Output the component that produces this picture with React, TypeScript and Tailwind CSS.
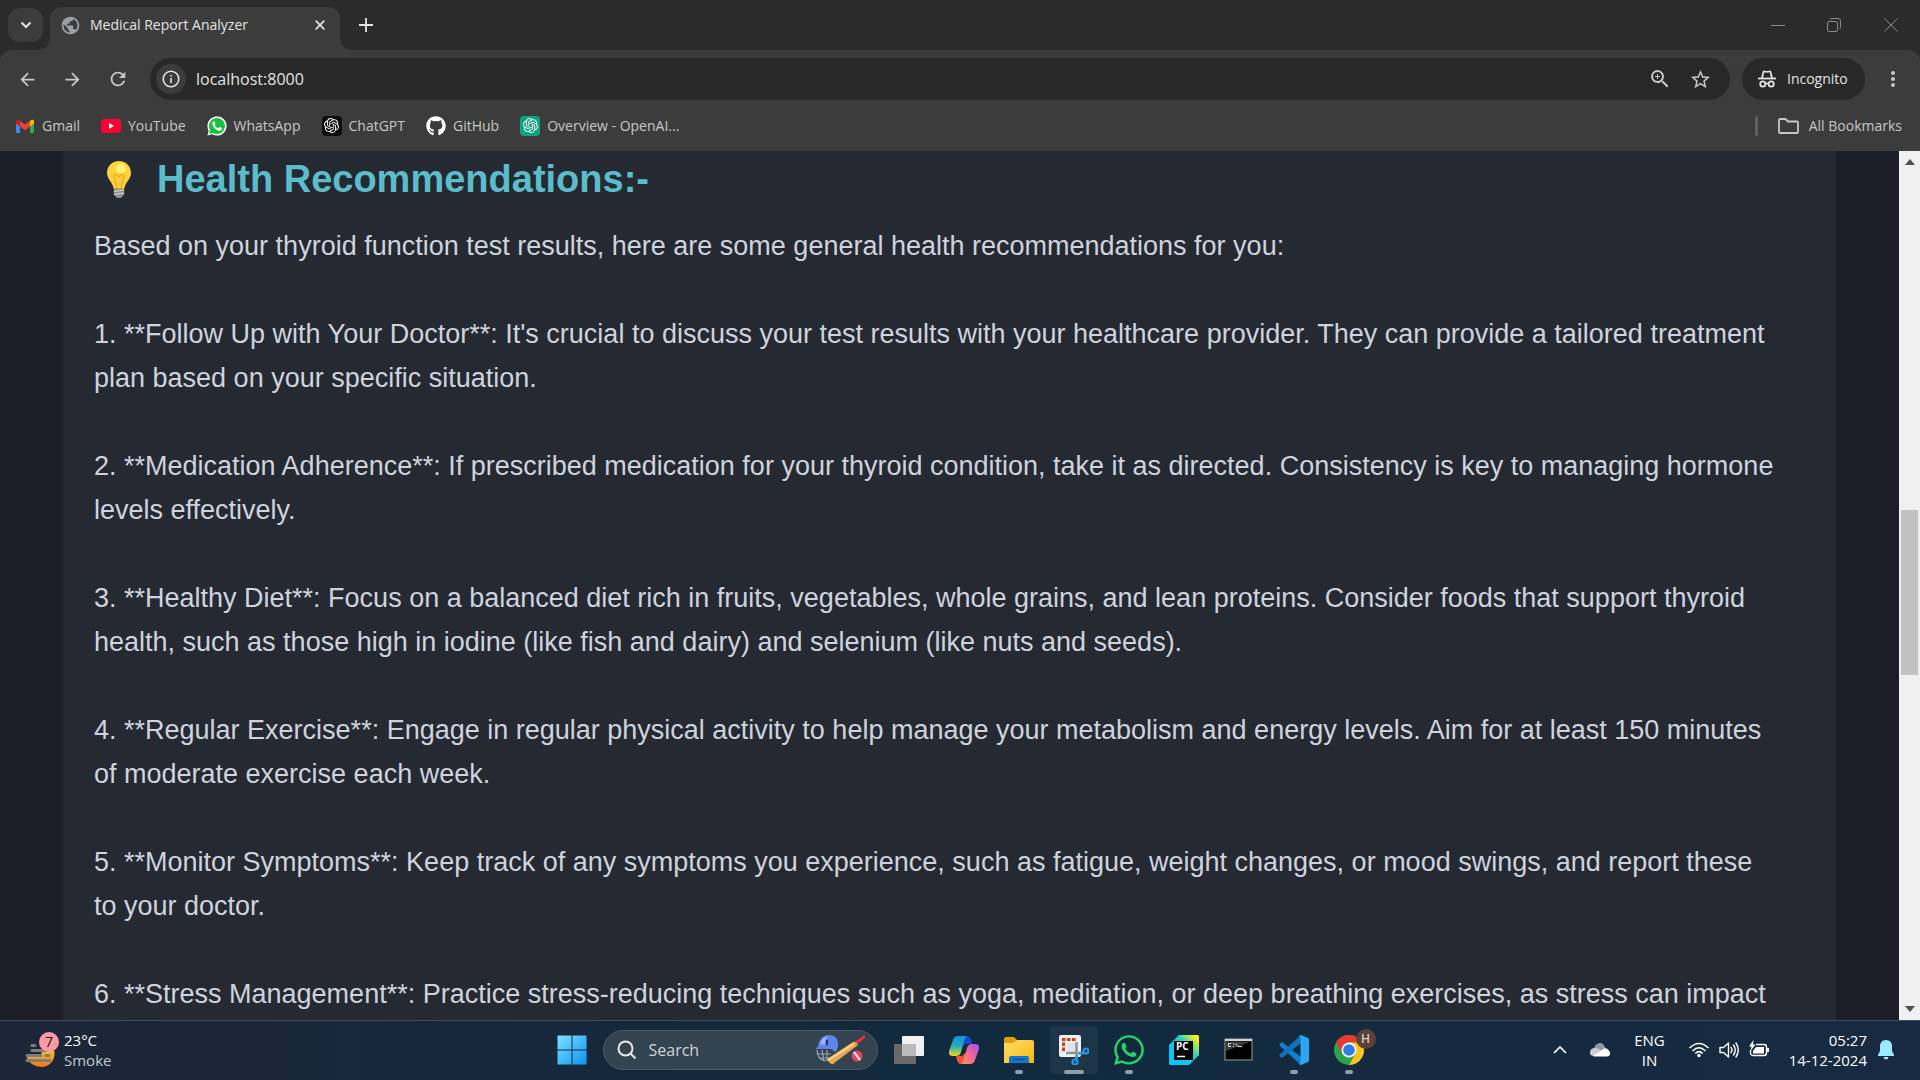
import React from "react";
import { FaGithub, FaWhatsapp } from "react-icons/fa";
import { SiOpenai } from "react-icons/si";
import { MdZoomIn, MdStarOutline, MdArrowBack, MdArrowForward, MdRefresh, MdPublic, MdMoreVert } from "react-icons/md";

function GmailIcon() {
  return (
    <svg viewBox="0 0 20 20" className="size-5" aria-hidden="true">
      <path d="M1 5v11q0 1 1 1h3V8z" fill="#4285f4" />
      <path d="M19 5v11q0 1-1 1h-3V8z" fill="#34a853" />
      <path d="M15 5.200C17 3 19 3.500 19 5.700V7.500l-4 3z" fill="#fbbc04" />
      <path d="M1 5.700C1 3.500 3 3 5 4.800V10.500L1 7.500z" fill="#c5221f" />
      <path d="M5 4.800 10 8.600 15 4.800V10.500L10 14.200 5 10.500z" fill="#ea4335" />
    </svg>
  );
}

function YouTubeIcon() {
  return (
    <svg viewBox="0 0 20 20" className="size-5" aria-hidden="true">
      <rect y="3" width="20" height="14" rx="3.500" fill="#ff0033" />
      <path d="M8 7v6l5-3z" fill="#fff" />
    </svg>
  );
}

function WhatsAppIcon() {
  return (
    <svg viewBox="0 0 24 24" className="size-5" aria-hidden="true">
      <path d="M.5 23.500 2 17.600A11.500 11.500 0 1 1 6.400 22z" fill="#fff" />
      <path d="m2.600 21.500 1.200-4.300A9.600 9.600 0 1 1 7 20.300z" fill="#15c13f" />
      <path d="M8.400 6.300c-.7 0-2 1-2 2.800 0 3.400 4.700 8.600 8.500 8.600 2 0 3-1.400 3-2.700 0-.5-2.700-2-3-1.800-.5.200-1 1.600-1.400 1.500-1.800-.5-3.900-2.600-4.300-4 0-.4.900-.9.900-1.500 0-.4-.9-2.900-1.700-2.900z" fill="#fff" />
    </svg>
  );
}

function IncognitoIcon() {
  return (
    <svg viewBox="0 0 20 20" className="size-5" fill="none" stroke="#e3e3e3" strokeWidth="1.800" aria-hidden="true">
      <path d="M5 9 6.500 3Q7 2 8 2.500 10 3.300 12 2.500 13 2 13.500 3L15 9" />
      <path d="M1 9.500h18" />
      <circle cx="5.800" cy="15" r="2.600" />
      <circle cx="14.200" cy="15" r="2.600" />
      <path d="M8.500 14.500h3" />
    </svg>
  );
}

function BulbIcon() {
  return (
    <svg viewBox="0 0 24 37" className="h-[37px] w-6" aria-hidden="true">
      <path d="M12 0C5 0 0 5.200 0 11.800c0 6.500 5.800 9.400 6.700 16h10.600c.9-6.600 6.700-9.500 6.700-16C24 5.200 19 0 12 0z" fill="#fdd23c" />
      <path d="M10 28 7 14.500q2-3 3.500 0 1.500 2 3 0 1.500-3 3.500 0L14 28" fill="none" stroke="#fba51c" strokeWidth="1.300" />
      <circle cx="14" cy="7.500" r="5" fill="#fff176" />
      <path d="M6.800 28h10.400v5.500L14 37h-4l-3.200-3.500z" fill="#8f8f93" />
      <path d="m7 30.500 10-1.500M7 33.500 17 32" stroke="#dcdcde" strokeWidth="1.200" />
    </svg>
  );
}

function WeatherIcon() {
  return (
    <svg viewBox="0 0 36 38" className="h-[38px] w-9" aria-hidden="true">
      <defs>
        <linearGradient id="sun" x2="0" y2="1">
          <stop stopColor="#f9bd2d" />
          <stop offset="1" stopColor="#f5731b" />
        </linearGradient>
      </defs>
      <path d="M3 24h13q0-4 4-4h9.500q.500 8-3.500 12-4.500 4-9 4Q6 35 2 28z" fill="url(#sun)" />
      <g stroke="#7b7d80" strokeWidth="3" strokeLinecap="round">
        <path d="M7 14.500h3M7 19.500h14M2 24.500h14M21 24.500h3M2 29.500h23" />
      </g>
      <circle cx="24" cy="11" r="10" fill="#ff99a4" />
      <text x="24" y="16" textAnchor="middle" fontSize="14" fontFamily="Open Sans, sans-serif" fill="#111">7</text>
    </svg>
  );
}

function StartIcon() {
  return (
    <svg viewBox="0 0 30 30" className="size-[30px]" aria-hidden="true">
      <defs>
        <linearGradient id="win" x2="1" y2="1">
          <stop stopColor="#7fe0ff" />
          <stop offset="1" stopColor="#0a93f5" />
        </linearGradient>
      </defs>
      <path d="M1 .5h13.500V14.500H.5V1zM15.500.5H29l.5.500v13.500h-14zM.5 15.500h14v14H1L.5 29zM15.500 15.500h14V29l-.5.500H15.500z" fill="url(#win)" />
    </svg>
  );
}

function CricketIcon() {
  return (
    <svg viewBox="0 0 50 30" className="h-[30px] w-[50px]" aria-hidden="true">
      <g fill="none" stroke="#9aa7b5" strokeWidth="1.200">
        <path d="M2 15q0 9 8 11l7-2M3 19h13M5 23h11M7 15l2 11M12 15v11" />
      </g>
      <path d="M3 12C4 3 9 0 14 0c6 0 10 4 9 12l-2 5-5-3H1q-1-1 2-2z" fill="#5d84ea" />
      <path d="M5 9Q7 2 13 1q-4 4-3 9z" fill="#9bb6ff" />
      <path d="M12 5v5" stroke="#23345e" strokeWidth="2" />
      <path d="m41 8 8-6" stroke="#dc3346" strokeWidth="3" strokeLinecap="round" />
      <path d="M12 24 38 7q3-1 5 3L18 29q-3 1-6-5z" fill="#e9a653" />
      <path d="M13 24 38 8l1 2-25 16z" fill="#ffd08b" />
      <circle cx="42" cy="21" r="5.500" fill="#e84458" />
      <path d="m39 17 6 8" stroke="#fff" strokeWidth="2" />
    </svg>
  );
}

function TaskViewIcon() {
  return (
    <svg viewBox="0 0 30 30" className="size-[30px]" aria-hidden="true">
      <rect x="8" y="1" width="22" height="20" rx="1" fill="#f1f1f1" />
      <rect y="9" width="22" height="20" rx="1" fill="#696969" />
      <path d="M8 9h14v12H8z" fill="#b9bbbb" />
    </svg>
  );
}

function CopilotIcon() {
  return (
    <svg viewBox="0 0 30 30" className="size-[30px]" aria-hidden="true">
      <defs>
        <linearGradient id="cpa" x2="0" y2="1">
          <stop stopColor="#138ee8" />
          <stop offset=".5" stopColor="#23b2b5" />
          <stop offset="1" stopColor="#f2d51c" />
        </linearGradient>
        <linearGradient id="cpb" x1="1" x2="0" y2="1">
          <stop stopColor="#a450ee" />
          <stop offset=".5" stopColor="#f0659a" />
          <stop offset="1" stopColor="#ff9a4a" />
        </linearGradient>
      </defs>
      <path d="M15 1h3q3 0 4 4l1 4h-6l-4 3z" fill="#1649c9" />
      <path d="M15 29h-3q-3 0-4-4l-1-4h6l4-4z" fill="#f4503a" />
      <path d="M9 1h9q-2 1-3 5l-3 11q-1 4-5 4H4q-5 0-4-5L4 5q1-4 5-4z" fill="url(#cpa)" />
      <path d="M21 29h-9q2-1 3-5l3-11q1-4 5-4h3q5 0 4 5l-4 11q-1 4-5 4z" fill="url(#cpb)" />
    </svg>
  );
}

function ExplorerIcon() {
  return (
    <svg viewBox="0 0 30 30" className="size-[30px]" aria-hidden="true">
      <defs>
        <linearGradient id="fold" x2="1" y2="1">
          <stop stopColor="#ffdf6b" />
          <stop offset="1" stopColor="#f8b611" />
        </linearGradient>
      </defs>
      <path d="M0 4q0-2 2-2h8l3 3v8H0z" fill="#e0a009" />
      <path d="M0 8h9l4-3h15q2 0 2 2v21H0z" fill="url(#fold)" />
      <path d="M5 28v-5q0-2 2-2h16q2 0 2 2v5z" fill="#0f78cf" />
      <path d="M9 24.500h12" stroke="#084b91" strokeWidth="1.500" />
    </svg>
  );
}

function SnipIcon() {
  return (
    <svg viewBox="0 0 30 30" className="size-[30px]" aria-hidden="true">
      <rect width="22" height="22" rx="2" fill="#eceff3" />
      <path d="M4.500 16V4.500H18" fill="none" stroke="#d4400b" strokeWidth="3" strokeDasharray="3.500 1.500" />
      <path d="M8 8h10v10H8z" fill="#dfe3ea" />
      <path d="M17.500 7v17M7 18h18" stroke="#8d949e" strokeWidth="2.500" />
      <g fill="none" stroke="#199be8" strokeWidth="2.200">
        <circle cx="27" cy="16" r="2.500" />
        <circle cx="16" cy="27" r="2.500" />
        <path d="m20 19 5-1.500M18 20l-1 5" />
      </g>
    </svg>
  );
}

function PyCharmIcon() {
  return (
    <svg viewBox="0 0 30 30" className="size-[30px]" aria-hidden="true">
      <defs>
        <linearGradient id="pc" x1=".2" y1=".7" x2="1" y2="0">
          <stop stopColor="#08c6f5" />
          <stop offset=".5" stopColor="#2ad0c4" />
          <stop offset=".85" stopColor="#f4ec1c" />
        </linearGradient>
      </defs>
      <path d="M0 10 10 0h19l1 1v19L20 30H1l-1-1z" fill="url(#pc)" />
      <rect x="5" y="6" width="19" height="19" fill="#000" />
      <text x="7" y="15" fontSize="10" fontWeight="700" fontFamily="Open Sans, sans-serif" fill="#fff">PC</text>
      <path d="M8 21.500h8" stroke="#fff" strokeWidth="1.500" />
    </svg>
  );
}

function TerminalIcon() {
  return (
    <svg viewBox="0 0 30 30" className="size-[30px]" aria-hidden="true">
      <rect x="1" y="4" width="27" height="21" fill="#000" stroke="#9b9da0" />
      <path d="M1 4h27v2H1z" fill="#d0d2d4" />
      <path d="M2 6.500h25L2 16z" fill="#3d3d3d" />
      <path d="M7 8.500H4.500v3H7M9 9h1M9 11.500h1M11.500 8.500l2 3M14 11.500h4" fill="none" stroke="#ddd" />
    </svg>
  );
}

function VsCodeIcon() {
  return (
    <svg viewBox="0 0 30 30" className="size-[30px]" aria-hidden="true">
      <path d="M1 8.500 3 7l19 15v8L1 11q-1-1 0-2.500z" fill="#0f7fd0" />
      <path d="M1 21.500 3 23 22 8V0L1 19q-1 1 0 2.500z" fill="#1272c0" />
      <path d="m22 0 7 3 1 1v22l-1 1-7 3-2-1 1.500-2V3L20 1z" fill="#2aa5f2" />
    </svg>
  );
}

function ChromeIcon() {
  return (
    <svg viewBox="0 0 30 30" className="size-[30px]" aria-hidden="true">
      <circle cx="15" cy="15" r="15" fill="#2ba24c" />
      <path d="M2 7.500A15 15 0 0 1 28 7.500H15L8.500 19z" fill="#e33b2e" />
      <path d="M28 7.500A15 15 0 0 1 15 30l6.500-11L15 7.500z" fill="#fcc31e" />
      <circle cx="15" cy="15" r="7.500" fill="#fff" />
      <circle cx="15" cy="15" r="5.800" fill="#2f7bea" />
    </svg>
  );
}

function WifiIcon() {
  return (
    <svg viewBox="0 0 20 20" className="size-5" fill="none" stroke="#fff" strokeWidth="1.500" aria-hidden="true">
      <path d="M.5 8Q10-1 19.500 8M3.500 11Q10 4.500 16.500 11M6.300 13.500Q10 9.800 13.700 13.500" />
      <circle cx="10" cy="15.500" r="1.700" fill="#fff" stroke="none" />
    </svg>
  );
}

function SpeakerIcon() {
  return (
    <svg viewBox="0 0 20 20" className="size-5" fill="none" stroke="#fff" strokeWidth="1.400" strokeLinejoin="round" strokeLinecap="round" aria-hidden="true">
      <path d="M1 7.500h3.500L9.500 3v14l-5-4.500H1zM12 7.500q2 2.500 0 5M14.500 5q3.500 5 0 10M17 3q4.500 7 0 14" />
    </svg>
  );
}

function BatteryIcon() {
  return (
    <svg viewBox="0 0 20 20" className="size-5" aria-hidden="true">
      <path d="M7 4.500h8q2.500 0 2.500 2.500v6q0 2.500-2.500 2.500H4Q1.500 15.500 1.500 13v-3" fill="none" stroke="#fff" strokeWidth="1.400" />
      <path d="M7 7h8v6.500H4V11z" fill="#fff" />
      <path d="M18 8h2v4h-2z" fill="#fff" />
      <path d="M4.500 0 0 6.500h2.500L1.500 11 6.500 4.500H4z" fill="#fff" />
    </svg>
  );
}

const bookmarks: { label: string; icon: React.ReactNode }[] = [
  { label: "Gmail", icon: <GmailIcon /> },
  { label: "YouTube", icon: <YouTubeIcon /> },
  { label: "WhatsApp", icon: <WhatsAppIcon /> },
  { label: "ChatGPT", icon: <span className="flex size-5 items-center justify-center rounded bg-[#0d0d0d] text-white"><SiOpenai size={15} /></span> },
  { label: "GitHub", icon: <FaGithub size={20} color="#fff" /> },
  { label: "Overview - OpenAI...", icon: <span className="flex size-5 items-center justify-center rounded bg-[#10a37f] text-white"><SiOpenai size={15} /></span> },
];

const recommendations = [
  ["Follow Up with Your Doctor", "It's crucial to discuss your test results with your healthcare provider. They can provide a tailored treatment plan based on your specific situation."],
  ["Medication Adherence", "If prescribed medication for your thyroid condition, take it as directed. Consistency is key to managing hormone levels effectively."],
  ["Healthy Diet", "Focus on a balanced diet rich in fruits, vegetables, whole grains, and lean proteins. Consider foods that support thyroid health, such as those high in iodine (like fish and dairy) and selenium (like nuts and seeds)."],
  ["Regular Exercise", "Engage in regular physical activity to help manage your metabolism and energy levels. Aim for at least 150 minutes of moderate exercise each week."],
  ["Monitor Symptoms", "Keep track of any symptoms you experience, such as fatigue, weight changes, or mood swings, and report these to your doctor."],
  ["Stress Management", "Practice stress-reducing techniques such as yoga, meditation, or deep breathing exercises, as stress can impact"],
];

function TabStrip() {
  return (
    <div className="flex h-[50px] shrink-0 items-start bg-[#2b2b2b] text-[#e3e3e3]">
      <button aria-label="Search tabs" className="mt-2 ml-2 flex h-[34px] w-[35px] items-center justify-center rounded-xl bg-[#3c3c3c]">
        <svg viewBox="0 0 12 8" className="h-2 w-3" fill="none" stroke="currentColor" strokeWidth="2"><path d="m1.500 1.500 4.500 4.500 4.500-4.500" /></svg>
      </button>
      <div className="relative mt-[7px] ml-[7px] flex h-[43px] w-[290px] items-center rounded-t-xl bg-[#3c3c3c] pr-2 pb-[7px] pl-2.5">
        <svg viewBox="0 0 14 14" className="absolute bottom-0 -left-3.5 size-3.5" aria-hidden="true"><path d="M14 0v14H0Q14 14 14 0" fill="#3c3c3c" /></svg>
        <svg viewBox="0 0 14 14" className="absolute -right-3.5 bottom-0 size-3.5" aria-hidden="true"><path d="M0 0v14h14Q0 14 0 0" fill="#3c3c3c" /></svg>
        <MdPublic size={21} color="#9aa0a6" />
        <span className="ml-[9px] flex-1 text-sm whitespace-nowrap">Medical Report Analyzer</span>
        <button aria-label="Close tab" className="flex size-6 items-center justify-center">
          <svg viewBox="0 0 10 10" className="size-2.5" stroke="currentColor" strokeWidth="1.700"><path d="m.7.700 8.600 8.600M9.300.7.700 9.300" /></svg>
        </button>
      </div>
      <button aria-label="New tab" className="mt-3 ml-[13px] flex size-[26px] items-center justify-center">
        <svg viewBox="0 0 14 14" className="size-3.5" stroke="currentColor" strokeWidth="1.800"><path d="M7 0v14M0 7h14" /></svg>
      </button>
      <div className="ml-auto flex h-[50px] text-[#8b8b8b]">
        <button aria-label="Minimize" className="flex w-14 items-center justify-center"><svg viewBox="0 0 14 14" className="size-3.5" stroke="currentColor"><path d="M0 7.500h14" /></svg></button>
        <button aria-label="Restore" className="flex w-14 items-center justify-center"><svg viewBox="0 0 14 14" className="size-3.5" fill="none" stroke="currentColor"><rect x=".5" y="3.500" width="10" height="10" rx="1.500" /><path d="M3 1.500Q4 .5 5 .5h6q2.500 0 2.500 2.500v6q0 1-1 2" /></svg></button>
        <button aria-label="Close" className="flex w-[58px] items-center justify-center"><svg viewBox="0 0 14 14" className="size-3.5" stroke="currentColor"><path d="m.5.500 13 13M13.500.5l-13 13" /></svg></button>
      </div>
    </div>
  );
}

function Toolbar() {
  return (
    <div className="shrink-0 bg-[#2b2b2b]">
      <div className="flex h-[50px] items-center rounded-t-xl bg-[#3c3c3c] pt-2 text-[#c7c7c7]">
        <div className="flex w-[150px] shrink-0 items-center pl-[17px]">
          <button aria-label="Back" className="w-[45px]"><MdArrowBack size={21} /></button>
          <button aria-label="Forward" className="w-[45px]"><MdArrowForward size={21} /></button>
          <button aria-label="Reload"><MdRefresh size={22} /></button>
        </div>
        <div className="flex h-[42px] flex-1 items-center rounded-full bg-[#282828] pr-[18px] pl-1.5">
          <button aria-label="Site information" className="flex size-[30px] items-center justify-center rounded-full bg-[#3c3c3c] text-[#e3e3e3]">
            <svg viewBox="0 0 18 18" className="size-[18px]" fill="none" stroke="currentColor" strokeWidth="1.600"><circle cx="9" cy="9" r="7.800" /><path d="M9 8v5M9 5v1.600" /></svg>
          </button>
          <input aria-label="Address" defaultValue="localhost:8000" className="ml-2.5 min-w-0 flex-1 bg-transparent text-base text-[#e3e3e3] outline-none" />
          <button aria-label="Zoom" className="mr-[17px]"><MdZoomIn size={24} /></button>
          <button aria-label="Bookmark this page"><MdStarOutline size={23} /></button>
        </div>
        <button className="ml-3 flex h-[42px] w-[123px] items-center gap-2.5 rounded-full bg-[#282828] pl-[15px] text-sm text-[#e3e3e3]">
          <IncognitoIcon />Incognito
        </button>
        <button aria-label="Menu" className="mr-[15px] ml-4"><MdMoreVert size={24} /></button>
      </div>
      <div className="flex h-[51px] items-center bg-[#3c3c3c] pr-[18px] pl-[15px] text-sm text-[#c7c7c7]">
        <nav aria-label="Bookmarks" className="flex gap-[21px]">
          {bookmarks.map((b) => (
            <a key={b.label} href="#" className="flex items-center gap-[7px] whitespace-nowrap">{b.icon}<span>{b.label}</span></a>
          ))}
        </nav>
        <span className="ml-auto h-5 w-[3px] rounded bg-[#5f5f5f]" />
        <a href="#" className="ml-5 flex items-center gap-2.5 whitespace-nowrap">
          <svg viewBox="0 0 21 16" className="h-4 w-[21px]" fill="none" stroke="currentColor" strokeWidth="1.800"><path d="M1 2q0-1 1-1h5.500L10 3.500h9q1 0 1 1V14q0 1-1 1H2q-1 0-1-1z" /></svg>
          All Bookmarks
        </a>
      </div>
    </div>
  );
}

function Scrollbar() {
  return (
    <div className="flex w-[21px] shrink-0 flex-col items-center bg-[#f0f0f0]">
      <svg viewBox="0 0 10 6" className="mt-2 h-1.5 w-2.5" aria-hidden="true"><path d="M0 6 5 0l5 6z" fill="#505050" /></svg>
      <div className="w-full basis-0 grow-[345]" />
      <div className="w-[17px] basis-0 grow-[165] bg-[#c1c1c1]" />
      <div className="w-full basis-0 grow-[331]" />
      <svg viewBox="0 0 10 6" className="mb-2 h-1.5 w-2.5" aria-hidden="true"><path d="m0 0 5 6 5-6z" fill="#505050" /></svg>
    </div>
  );
}

function TaskButton({ label, state, children }: { label: string; state?: "open" | "active"; children: React.ReactNode }) {
  return (
    <button aria-label={label} className={state === "active" ? "relative flex size-12 items-center justify-center rounded bg-white/5" : "relative flex size-12 items-center justify-center"}>
      {children}
      {state === "open" && <span className="absolute bottom-0 h-1 w-2 rounded-full bg-[#939da6]" />}
      {state === "active" && <span className="absolute bottom-0 h-1 w-5 rounded-full bg-[#939da6]" />}
    </button>
  );
}

function Taskbar() {
  return (
    <footer className="grid h-[60px] shrink-0 grid-cols-[1fr_auto_1fr] items-center border-t border-[#454c54] bg-linear-to-r from-[#1c2638] via-[#112a3d] to-[#172a42] pb-0.5 text-[15px] text-white">
      <button className="flex items-center gap-[3px] pl-[25px] text-left">
        <WeatherIcon />
        <span className="leading-5">23°C<br /><span className="text-[#c4c9cf]">Smoke</span></span>
      </button>
      <div className="flex items-center gap-[7px]">
        <TaskButton label="Start"><StartIcon /></TaskButton>
        <div className="flex h-10 w-[275px] items-center rounded-full border border-[#4c5964] bg-[#344350] pr-3 pl-[13px]">
          <svg viewBox="0 0 20 20" className="size-5" fill="none" stroke="#e6e8ea" strokeWidth="2" aria-hidden="true"><circle cx="8.500" cy="8.500" r="7" /><path d="m13.500 13.500 5 5" /></svg>
          <input aria-label="Search" placeholder="Search" className="ml-3 min-w-0 flex-1 bg-transparent text-base outline-none placeholder:text-[#d0d4d8]" />
          <CricketIcon />
        </div>
        <TaskButton label="Task view"><TaskViewIcon /></TaskButton>
        <TaskButton label="Copilot"><CopilotIcon /></TaskButton>
        <TaskButton label="File Explorer" state="open"><ExplorerIcon /></TaskButton>
        <TaskButton label="Snipping Tool" state="active"><SnipIcon /></TaskButton>
        <TaskButton label="WhatsApp" state="open"><FaWhatsapp size={34} color="#25d366" /></TaskButton>
        <TaskButton label="PyCharm"><PyCharmIcon /></TaskButton>
        <TaskButton label="Command Prompt"><TerminalIcon /></TaskButton>
        <TaskButton label="Visual Studio Code" state="open"><VsCodeIcon /></TaskButton>
        <TaskButton label="Chrome" state="open">
          <ChromeIcon />
          <span className="absolute top-[3px] -right-[3px] flex size-5 items-center justify-center rounded-full bg-[#5d4037] text-xs font-semibold text-[#d7ccc8]">H</span>
        </TaskButton>
      </div>
      <div className="flex items-center justify-end pr-[26px]">
        <button aria-label="Show hidden icons" className="mr-[23px]"><svg viewBox="0 0 14 8" className="h-2 w-3.5" fill="none" stroke="#fff" strokeWidth="1.700"><path d="m1 7 6-6 6 6" /></svg></button>
        <button aria-label="OneDrive" className="mr-6">
          <svg viewBox="0 0 20 14" className="h-3.5 w-5"><path d="M3 9Q4 3 7 1q5-3 8 3l1 4z" fill="#929aa6" /><path d="M0 10q0-5 5-5 4 0 8 4l-3 4H4q-4 0-4-3z" fill="#c9cdd3" /><path d="M3 13 12 7q3-3 6-.5 2 2 2 4 0 3-3 3H4z" fill="#fff" /></svg>
        </button>
        <button className="mr-6 text-center leading-5">ENG<br />IN</button>
        <button aria-label="Network, volume, battery" className="mr-5 flex gap-2.5"><WifiIcon /><SpeakerIcon /><BatteryIcon /></button>
        <button className="mr-[11px] text-right leading-5 whitespace-nowrap">05:27<br />14-12-2024</button>
        <button aria-label="Notifications"><svg viewBox="0 0 16 20" className="h-5 w-4" fill="#99ebff"><path d="M8 0C4 0 2 3 2 6v5l-2 4v1h16v-1l-2-4V6c0-3-2-6-6-6zM5.500 17h5q-.5 2.500-2.500 2.500T5.500 17z" /></svg></button>
      </div>
    </footer>
  );
}

export default function App() {
  return (
    <div className="flex h-screen flex-col overflow-hidden font-['Open_Sans',sans-serif]">
      <TabStrip />
      <Toolbar />
      <div className="flex min-h-0 flex-1">
        <main className="min-w-0 flex-1 overflow-hidden bg-[#1b1e26] px-[63px] font-['Liberation_Sans',Arial,sans-serif]">
          <section className="min-h-full bg-[#252931] pt-1.5 pr-[59px] pl-[31px]">
            <h2 className="flex h-11 items-center gap-[26px] pl-[13px] text-[38px] leading-11 font-bold whitespace-nowrap text-[#5bbccb]">
              <BulbIcon />
              Health Recommendations:-
            </h2>
            <div className="mt-[23px] text-[27px] leading-11 text-[#ced3de]">
              <p>Based on your thyroid function test results, here are some general health recommendations for you:</p>
              <ol>
                {recommendations.map(([title, body], i) => (
                  <li key={title} className="mt-11">{`${i + 1}. **${title}**: ${body}`}</li>
                ))}
              </ol>
            </div>
          </section>
        </main>
        <Scrollbar />
      </div>
      <Taskbar />
    </div>
  );
}
